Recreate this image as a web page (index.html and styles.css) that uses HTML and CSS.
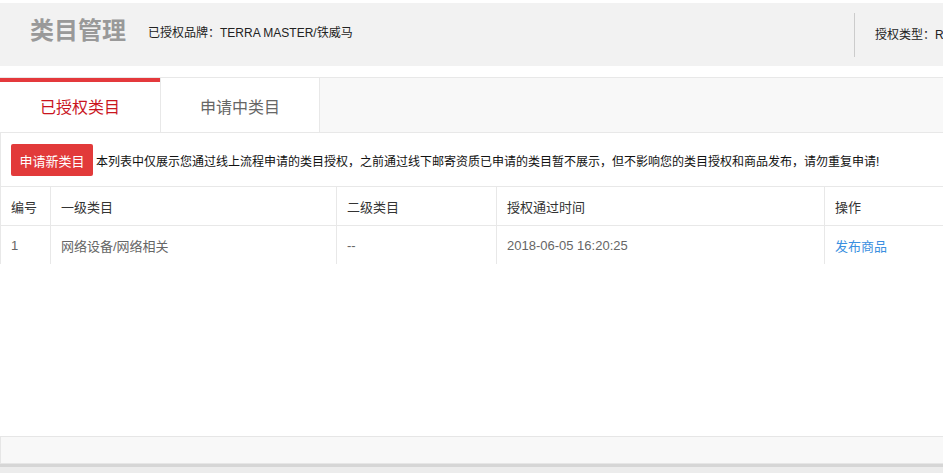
FILE: index.html
```html
<!DOCTYPE html>
<html lang="zh-CN">
<head>
  <meta charset="UTF-8">
  <title>类目管理</title>
  <link rel="stylesheet" href="styles.css">
</head>
<body>
  <div class="page">
    <div class="head">
      <div class="head-left">
        <h1 class="title">类目管理</h1>
        <span class="brand">已授权品牌：TERRA MASTER/铁威马</span>
      </div>
      <div class="head-right">授权类型：R品牌授权</div>
    </div>

    <div class="panel">
      <ul class="tabs">
        <li class="tab active">已授权类目</li>
        <li class="tab">申请中类目</li>
      </ul>
      <div class="panel-body">
        <div class="toolbar">
          <button class="btn-red">申请新类目</button>
          <span class="notice">本列表中仅展示您通过线上流程申请的类目授权，之前通过线下邮寄资质已申请的类目暂不展示，但不影响您的类目授权和商品发布，请勿重复申请!</span>
        </div>
        <table class="list">
          <thead>
            <tr>
              <th class="col-no">编号</th>
              <th class="col-first">一级类目</th>
              <th class="col-second">二级类目</th>
              <th class="col-time">授权通过时间</th>
              <th>操作</th>
            </tr>
          </thead>
          <tbody>
            <tr>
              <td>1</td>
              <td>网络设备/网络相关</td>
              <td>--</td>
              <td>2018-06-05 16:20:25</td>
              <td><a href="#" class="link">发布商品</a></td>
            </tr>
          </tbody>
        </table>
      </div>
    </div>

    <div class="foot"></div>
    <div class="foot-edge"></div>
  </div>
</body>
</html>
```

FILE: styles.css
```css
/* 基本样式 */
html, body {
  margin: 0;
  overflow: hidden;
  background: #fff;
}
body {
  font-family: "Liberation Sans", "Noto Sans CJK SC", sans-serif;
  font-size: 12px;
  color: #333;
}
.page {
  width: 1010px;
  padding-top: 3px;
}

/* 顶部标题栏 */
.head {
  display: flex;
  align-items: center;
  height: 63px;
  background: #f2f2f2;
  padding-left: 30px;
}
.head-left {
  display: flex;
  align-items: center;
  align-self: flex-start;
  padding-top: 13px;
  height: 30px;
}
.title {
  margin: 0;
  font-size: 24px;
  font-weight: bold;
  color: #999;
  line-height: 30px;
}
.brand {
  margin-left: 22px;
  font-size: 12px;
  color: #222;
}
.head-right {
  margin-left: auto;
  width: 135px;
  height: 44px;
  line-height: 44px;
  border-left: 1px solid #ccc;
  padding-left: 20px;
  white-space: nowrap;
  color: #222;
}

/* 选项卡面板 */
.panel {
  margin-top: 11px;
  min-height: 359px;
  box-sizing: border-box;
}
.tabs {
  display: flex;
  margin: 0;
  padding: 0;
  list-style: none;
  background: #f8f8f8;
  border-top: 1px solid #e8e8e8;
  border-bottom: 1px solid #e8e8e8;
}
.tab {
  width: 160px;
  height: 54px;
  padding-top: 6px;
  line-height: 48px;
  box-sizing: border-box;
  text-align: center;
  font-size: 16px;
  color: #666;
  background: #fff;
  border-left: 1px solid #e8e8e8;
  border-right: 1px solid #e8e8e8;
}
.tab.active {
  padding-top: 2px;
  color: #c9151e;
  border: none;
  border-top: 4px solid #e4393c;
}
.panel-body {
  border-left: 1px solid #e8e8e8;
}
.toolbar {
  display: flex;
  align-items: center;
  padding: 11px 10px 10px;
}
.btn-red {
  width: 82px;
  height: 32px;
  padding: 0;
  border: none;
  border-radius: 2px;
  background: #e23a3a;
  color: #fff;
  font-family: inherit;
  font-size: 13px;
  cursor: pointer;
}
.notice {
  margin-left: 3px;
  color: #111;
  white-space: nowrap;
}

/* 列表 */
.list {
  width: 100%;
  border-collapse: collapse;
  font-size: 13px;
}
.list th,
.list td {
  height: 38px;
  padding: 0 10px;
  text-align: left;
  border-top: 1px solid #e8e8e8;
  border-left: 1px solid #e8e8e8;
}
.list th:first-child,
.list td:first-child {
  border-left: none;
}
.list th {
  font-weight: normal;
  color: #333;
}
.list td {
  color: #666;
}
.col-no { width: 29px; }
.col-first { width: 265px; }
.col-second { width: 139px; }
.col-time { width: 307px; }
.link {
  color: #3b8fe0;
  text-decoration: none;
}

/* 底部栏 */
.foot {
  height: 26px;
  background: #f8f8f8;
  border: 1px solid #e6e6e6;
}
.foot-edge {
  height: 3px;
  background: #d6d6d6;
  border-bottom: 6px solid #ececec;
}
```
